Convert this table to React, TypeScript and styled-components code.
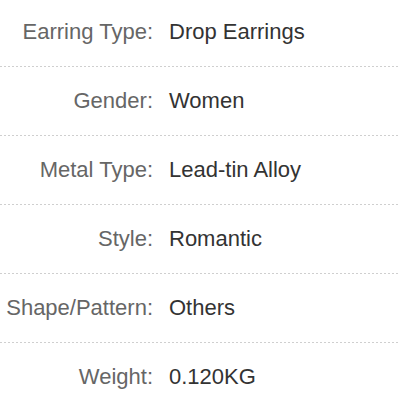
import React from "react";
import styled, { createGlobalStyle } from "styled-components";

const Global = createGlobalStyle`
  html, body { margin: 0; padding: 0; background: #fff; }
  body { font-family: "Liberation Sans", Arial, Helvetica, sans-serif; }
`;

const List = styled.div`
  width: 400px;
  margin-top: -2px;
  display: flex;
  flex-direction: column;
`;

const Row = styled.div`
  display: grid;
  grid-template-columns: 153px 1fr;
  column-gap: 16px;
  align-items: center;
  height: 68px;
  padding-bottom: 1px;
  font-size: 22px;
  background-image: linear-gradient(to right, #cfcfcf 50%, transparent 50%);
  background-size: 4px 1px;
  background-repeat: repeat-x;
  background-position: left bottom;
  &:last-child { background-image: none; }
`;

const Label = styled.div`
  text-align: right;
  color: #666;
  white-space: nowrap;
`;

const Value = styled.div`
  color: #333;
  white-space: nowrap;
`;

const items: [string, string][] = [
  ["Earring Type:", "Drop Earrings"],
  ["Gender:", "Women"],
  ["Metal Type:", "Lead-tin Alloy"],
  ["Style:", "Romantic"],
  ["Shape/Pattern:", "Others"],
  ["Weight:", "0.120KG"],
];

export default function App() {
  return (
    <>
      <Global />
      <List>
        {items.map(([k, v]) => (
          <Row key={k}>
            <Label>{k}</Label>
            <Value>{v}</Value>
          </Row>
        ))}
      </List>
    </>
  );
}
